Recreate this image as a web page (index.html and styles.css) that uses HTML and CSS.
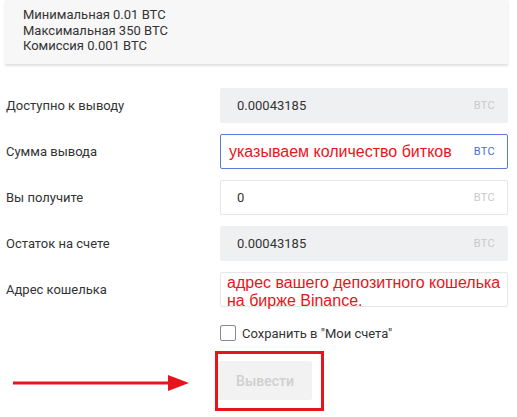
FILE: index.html
```html
<!DOCTYPE html>
<html lang="ru">
<head>
  <meta charset="UTF-8">
  <meta name="viewport" content="width=device-width, initial-scale=1.0">
  <title>Вывод BTC</title>
  <link rel="stylesheet" href="styles.css">
</head>
<body>
  <div class="limits">
    <div>Минимальная 0.01 BTC</div>
    <div>Максимальная 350 BTC</div>
    <div>Комиссия 0.001 BTC</div>
  </div>

  <form class="withdraw">
    <label class="row-label">Доступно к выводу</label>
    <div class="field field-readonly">
      <span class="field-value">0.00043185</span>
      <span class="field-unit">BTC</span>
    </div>

    <label class="row-label">Сумма вывода</label>
    <div class="field field-active">
      <span class="field-note">указываем количество битков</span>
      <span class="field-unit">BTC</span>
    </div>

    <label class="row-label">Вы получите</label>
    <div class="field">
      <span class="field-value">0</span>
      <span class="field-unit">BTC</span>
    </div>

    <label class="row-label">Остаток на счете</label>
    <div class="field field-readonly">
      <span class="field-value">0.00043185</span>
      <span class="field-unit">BTC</span>
    </div>

    <label class="row-label">Адрес кошелька</label>
    <div class="field field-address">
      <span class="field-note">адрес вашего депозитного кошелька на бирже Binance.</span>
    </div>

    <div></div>
    <label class="save">
      <span class="checkbox"></span>
      Сохранить в "Мои счета"
    </label>

    <div></div>
    <div class="submit-wrap">
      <div class="highlight">
        <button type="button" class="submit" disabled>Вывести</button>
      </div>
    </div>
  </form>

  <svg class="arrow" width="190" height="24" viewBox="0 0 190 24">
    <line x1="13" y1="12" x2="172" y2="12" stroke="#e8141b" stroke-width="3"/>
    <polygon points="168,4 189,12 168,20" fill="#e8141b"/>
  </svg>
</body>
</html>
```

FILE: styles.css
```css
body {
  margin: 0;
  font-family: Roboto, "Liberation Sans", Arial, sans-serif;
  color: #333;
  background-color: #fff;
  position: relative;
  width: 517px;
  height: 417px;
  overflow: hidden;
}
.limits {
  margin: 0 9px 0 5px;
  padding: 7px 18px 10px;
  height: 47px;
  background-color: #f7f7f7;
  box-shadow: 0 2px 2px rgba(0, 0, 0, 0.12);
  font-size: 13px;
  line-height: 15.5px;
  color: #333;
}
.withdraw {
  display: grid;
  grid-template-columns: 220px 288px;
  row-gap: 11px;
  margin-top: 24px;
}
.row-label {
  padding-left: 6px;
  font-size: 13px;
  line-height: 35px;
  color: #333;
}
.field {
  display: flex;
  align-items: center;
  justify-content: space-between;
  box-sizing: border-box;
  height: 35px;
  padding: 0 12px 0 16px;
  border: 1px solid #e6e6e6;
  border-radius: 2px;
  background-color: #fff;
}
.field-readonly {
  background-color: #eff0f2;
  border-color: #eff0f2;
}
.field-active {
  border-color: #5b7bd6;
  padding-left: 8px;
}
.field-value {
  font-size: 13px;
  color: #333;
}
.field-unit {
  font-size: 11px;
  color: #c9c9c9;
  letter-spacing: 0.3px;
}
.field-active .field-unit {
  color: #4a6fd1;
}
.field-note {
  font-family: "Liberation Sans", Arial, sans-serif;
  font-size: 16px;
  color: #e8141b;
}
.field-address {
  align-items: flex-start;
  padding: 1px 6px 0 6px;
}
.field-address .field-note {
  line-height: 18px;
}
.save {
  display: flex;
  align-items: center;
  gap: 6px;
  margin-top: 7px;
  font-size: 13px;
  color: #333;
}
.checkbox {
  display: inline-block;
  width: 14px;
  height: 14px;
  border: 1px solid #8a8a8a;
  border-radius: 2px;
  background-color: #fff;
}
.submit-wrap {
  margin-top: -1px;
  margin-left: -5px;
}
.highlight {
  display: inline-block;
  border: 3px solid #e8141b;
  padding: 7px 9px 8px 0;
}
.submit {
  display: block;
  width: 94px;
  height: 39px;
  border: none;
  border-radius: 2px;
  background-color: #f2f2f2;
  color: #cfcfcf;
  font-family: Roboto, "Liberation Sans", Arial, sans-serif;
  font-size: 14px;
  font-weight: 500;
}
.arrow {
  position: absolute;
  left: 0;
  top: 371px;
}
```
